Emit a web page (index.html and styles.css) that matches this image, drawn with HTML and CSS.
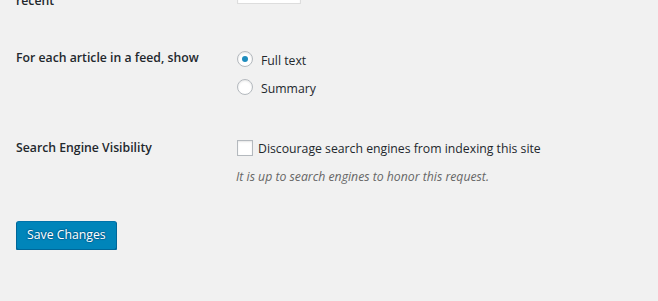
FILE: index.html
```html
<!doctype html>
<html>
  <head>
    <meta charset="utf-8">
    <title>Reading Settings</title>
    <link rel="stylesheet" href="styles.css">
  </head>
  <body>
    <div class="wrap">
      <form>
        <table class="form-table">
          <tr class="row-posts">
            <th>Syndication feeds show the most<br>recent</th>
            <td><input type="number" class="small-text" value="10"></td>
          </tr>
          <tr class="row-feed">
            <th>For each article in a feed, show</th>
            <td>
              <fieldset class="choices">
                <label class="choice"><input type="radio" name="rss_use_excerpt" value="0" checked> <span>Full text</span></label>
                <label class="choice"><input type="radio" name="rss_use_excerpt" value="1"> <span>Summary</span></label>
              </fieldset>
            </td>
          </tr>
          <tr class="row-public">
            <th>Search Engine Visibility</th>
            <td>
              <fieldset>
                <label class="check"><input type="checkbox" name="blog_public" value="0"> <span>Discourage search engines from indexing this site</span></label>
                <p class="description">It is up to search engines to honor this request.</p>
              </fieldset>
            </td>
          </tr>
        </table>
        <p class="submit">
          <button type="button" class="button-primary">Save Changes</button>
        </p>
      </form>
    </div>
  </body>
</html>
```
FILE: styles.css
```css
html, body {
  margin: 0;
  background: #f1f1f1;
}
body {
  font-family: 'Open Sans', 'Noto Sans', sans-serif;
  font-size: 12.25px;
  color: #23282d;
  overflow: hidden;
}
.wrap {
  margin-left: 16px;
}
form {
  margin: 0;
}
.form-table {
  border-collapse: collapse;
  margin-top: -45px;
}
.form-table th {
  width: 200px;
  padding: 20px 10px 20px 0;
  text-align: left;
  vertical-align: top;
  font-weight: 600;
  line-height: 17px;
}
.row-posts th {
  white-space: nowrap;
}
.form-table td {
  padding: 15px 10px;
  vertical-align: top;
  line-height: 17px;
}
fieldset {
  margin: 0;
  padding: 0;
  border: 0;
}
.small-text {
  box-sizing: border-box;
  width: 64px;
  height: 28px;
  margin: 6px 0 0 1px;
  border: 1px solid #ddd;
  background: #fff;
  box-shadow: inset 0 1px 2px rgba(0, 0, 0, .07);
  font: inherit;
  color: #32373c;
}
.choices {
  padding: 1px 0 3px;
}
.choice {
  display: flex;
  align-items: center;
  height: 28px;
}
.choice input,
.check input {
  appearance: none;
  box-sizing: border-box;
  width: 16px;
  height: 16px;
  margin: 0 0 0 1px;
  border: 1px solid #b4b9be;
  background: #fff;
  box-shadow: inset 0 1px 2px rgba(0, 0, 0, .1);
  flex: none;
}
.choice input {
  border-radius: 50%;
  margin-right: 8px;
  display: flex;
  align-items: center;
  justify-content: center;
}
.choice input:checked::before {
  content: "";
  width: 6px;
  height: 6px;
  border-radius: 50%;
  background: #1e8cbe;
}
.choice span {
  margin-top: 2px;
}
.check {
  display: flex;
  align-items: center;
  height: 18px;
  margin-top: 5px;
}
.check input {
  margin-right: 5px;
}
.description {
  margin: 11px 0 0;
  font-style: italic;
  color: #666;
}
.submit {
  margin: 21px 0 0;
}
.button-primary {
  box-sizing: border-box;
  height: 29px;
  padding: 0 10px 1px;
  border: 1px solid;
  border-color: #0073aa #006799 #006799;
  border-radius: 3px;
  background: #0085ba;
  box-shadow: 0 1px 0 #006799;
  color: #fff;
  font: inherit;
  line-height: 26px;
  text-shadow: 0 -1px 1px #006799, 1px 0 1px #006799, 0 1px 1px #006799, -1px 0 1px #006799;
}
```
